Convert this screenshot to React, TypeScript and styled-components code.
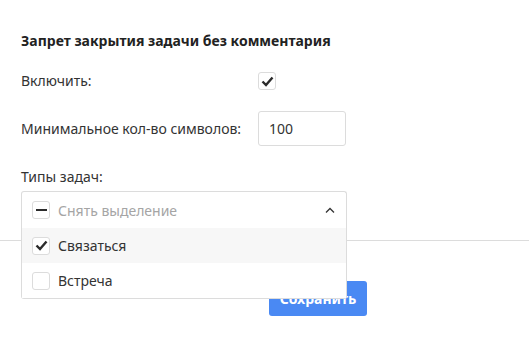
import React from 'react'
import styled, { createGlobalStyle } from 'styled-components'

const GlobalStyle = createGlobalStyle`
  html, body {
    margin: 0;
    padding: 0;
    background: #fff;
  }
  body {
    font-family: 'Noto Sans', 'Open Sans', sans-serif;
    color: #333;
  }
`

const CheckIcon = () => (
  <svg width="13" height="11" viewBox="0 0 13 11">
    <path d="M1.5 5.5 L5 9 L11.5 1.5" fill="none" stroke="#2b2b2b" strokeWidth="2.4" />
  </svg>
)

const ChevronUp = () => (
  <svg width="10" height="6" viewBox="0 0 10 6">
    <path d="M1 5.5 L5 1.5 L9 5.5" fill="none" stroke="#333" strokeWidth="1.3" />
  </svg>
)

const options = [
  { id: 1, title: 'Связаться', checked: true },
  { id: 2, title: 'Встреча', checked: false },
]

export default function App() {
  return (
    <Page>
      <GlobalStyle />
      <Section>
        <Title>Запрет закрытия задачи без комментария</Title>
        <FieldRow>
          <Label>Включить:</Label>
          <Checkbox>
            <CheckIcon />
          </Checkbox>
        </FieldRow>
        <FieldRow $top={21}>
          <Label>Минимальное кол-во символов:</Label>
          <NumberInput defaultValue="100" />
        </FieldRow>
        <TypesLabel>Типы задач:</TypesLabel>
        <Select>
          <SelectHead>
            <Checkbox>
              <Dash />
            </Checkbox>
            <Placeholder>Снять выделение</Placeholder>
            <Arrow>
              <ChevronUp />
            </Arrow>
          </SelectHead>
          <Menu>
            {options.map((item) => (
              <Option key={item.id} $active={item.checked}>
                <Checkbox>{item.checked && <CheckIcon />}</Checkbox>
                <OptionText>{item.title}</OptionText>
              </Option>
            ))}
          </Menu>
        </Select>
      </Section>
      <Footer>
        <SaveButton>Сохранить</SaveButton>
      </Footer>
    </Page>
  )
}

const Page = styled.div`
  width: 529px;
  height: 337px;
  overflow: hidden;
`

const Section = styled.section`
  padding: 31px 21px 0 21px;
`

const Title = styled.h3`
  margin: 0 0 21px 0;
  font-size: 14px;
  font-weight: 700;
  line-height: 20px;
  color: #222;
`

const FieldRow = styled.div<{ $top?: number }>`
  display: grid;
  grid-template-columns: 237px auto;
  align-items: center;
  margin-top: ${(p) => p.$top || 0}px;
`

const Label = styled.span`
  font-size: 14px;
  line-height: 18px;
  color: #333;
`

const Checkbox = styled.span`
  display: inline-flex;
  align-items: center;
  justify-content: center;
  width: 18px;
  height: 18px;
  box-sizing: border-box;
  border: 1px solid #dcdcdc;
  border-radius: 3px;
  background: #fff;
  flex-shrink: 0;
`

const Dash = styled.span`
  width: 11px;
  height: 2px;
  background: #2b2b2b;
`

const NumberInput = styled.input`
  width: 88px;
  height: 35px;
  box-sizing: border-box;
  border: 1px solid #dcdcdc;
  border-radius: 3px;
  padding: 0 10px;
  font-family: inherit;
  font-size: 14px;
  color: #333;
  outline: none;
`

const TypesLabel = styled.div`
  margin-top: 22px;
  font-size: 14px;
  line-height: 18px;
  color: #333;
`

const Select = styled.div`
  position: relative;
  width: 326px;
  margin-top: 5px;
`

const SelectHead = styled.div`
  display: flex;
  align-items: center;
  height: 37px;
  box-sizing: border-box;
  padding: 0 10px;
  border: 1px solid #dcdcdc;
  border-bottom: none;
  border-radius: 3px 3px 0 0;
  background: #fff;
`

const Placeholder = styled.span`
  flex: 1;
  margin-left: 8px;
  font-size: 14px;
  color: #a5a5a5;
`

const Arrow = styled.span`
  display: flex;
  margin-right: 1px;
`

const Menu = styled.div`
  position: absolute;
  top: 100%;
  left: 0;
  right: 0;
  z-index: 2;
  box-sizing: border-box;
  border: 1px solid #dcdcdc;
  border-top: none;
  border-radius: 0 0 3px 3px;
  background: #fff;
`

const Option = styled.div<{ $active?: boolean }>`
  display: flex;
  align-items: center;
  height: 35px;
  padding: 0 10px;
  background: ${(p) => (p.$active ? '#f7f7f7' : '#fff')};
`

const OptionText = styled.span`
  margin-left: 8px;
  font-size: 14px;
  color: #333;
`

const Footer = styled.div`
  margin-top: 12px;
  border-top: 1px solid #dcdcdc;
  padding: 40px 0 0 269px;
`

const SaveButton = styled.button`
  width: 98px;
  height: 35px;
  border: none;
  border-radius: 3px;
  background: #4a89f3;
  color: #fff;
  font-family: inherit;
  font-size: 14px;
  font-weight: 700;
`
